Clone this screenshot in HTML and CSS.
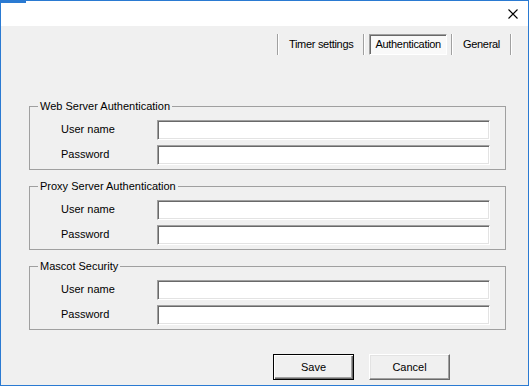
FILE: index.html
```html
<!DOCTYPE html>
<html>
<head>
<meta charset="utf-8">
<link rel="stylesheet" href="styles.css">
</head>
<body>
<div class="window">
  <div class="titlebar">
    <svg class="close" width="10" height="10" viewBox="0 0 10 10"><path d="M0.5 0.5 L9.5 9.5 M9.5 0.5 L0.5 9.5" stroke="#000" stroke-width="1.1" fill="none"/></svg>
  </div>
  <div class="content">
    <div class="tabs">
      <span class="sep"></span>
      <span class="tab">Timer settings</span>
      <span class="sep"></span>
      <span class="tab active">Authentication</span>
      <span class="sep"></span>
      <span class="tab">General</span>
      <span class="sep"></span>
    </div>
    <div class="groups">
      <fieldset class="group">
        <legend>Web Server Authentication</legend>
        <div class="rows">
          <label>User name</label><input class="field" type="text">
          <label>Password</label><input class="field" type="text">
        </div>
      </fieldset>
      <fieldset class="group">
        <legend>Proxy Server Authentication</legend>
        <div class="rows">
          <label>User name</label><input class="field" type="text">
          <label>Password</label><input class="field" type="text">
        </div>
      </fieldset>
      <fieldset class="group">
        <legend>Mascot Security</legend>
        <div class="rows">
          <label>User name</label><input class="field" type="text">
          <label>Password</label><input class="field" type="text">
        </div>
      </fieldset>
    </div>
    <div class="actions">
      <button class="btn default">Save</button>
      <button class="btn">Cancel</button>
    </div>
  </div>
</div>
</body>
</html>
```
FILE: styles.css
```css
html, body {
  margin: 0;
  padding: 0;
  background: #f0f0f0;
}
body {
  font-family: "Liberation Sans", Arial, sans-serif;
  font-size: 11px;
  color: #000;
}
.window {
  width: 529px;
  height: 386px;
  box-sizing: border-box;
  border: 1px solid #2a7ad2;
  background: #f0f0f0;
  display: flex;
  flex-direction: column;
}
.titlebar {
  position: relative;
  height: 25px;
  background: #fff;
  display: flex;
  justify-content: flex-end;
  align-items: center;
  padding-right: 10px;
}
.titlebar::before {
  content: "";
  position: absolute;
  left: -1px;
  top: -1px;
  width: 26px;
  height: 3px;
  background: #2a7ad2;
}
.close {
  display: block;
}
.content {
  flex: 1;
  display: flex;
  flex-direction: column;
}
.tabs {
  display: flex;
  justify-content: flex-end;
  align-items: stretch;
  height: 21px;
  margin-top: 8px;
  padding-right: 16px;
}
.sep {
  width: 1px;
  border-left: 1px solid #a0a0a0;
  background: #fff;
}
.tab {
  display: flex;
  align-items: center;
  padding: 0 5px;
  margin: 0 4px;
  border: 1px solid transparent;
  line-height: 13px;
  letter-spacing: -0.3px;
}
.tab.active {
  background: #f9f9f9;
  border-color: #a0a0a0 #fff #fff #a0a0a0;
  box-shadow: inset 1px 1px #696969;
}
.groups {
  display: flex;
  flex-direction: column;
  gap: 10px;
  margin-top: 45px;
  margin-left: 28px;
}
.group {
  width: 477px;
  box-sizing: border-box;
  margin: 0;
  padding: 0;
  border: 1px solid #a0a0a0;
  min-width: 0;
}
.group legend {
  margin-left: 8px;
  padding: 0 2px;
  line-height: 13px;
}
.rows {
  display: grid;
  grid-template-columns: 96px 333px;
  row-gap: 5px;
  align-items: center;
  padding: 7px 0 4px 31px;
}
.rows label {
  line-height: 13px;
  margin-bottom: 2px;
}
.field {
  box-sizing: border-box;
  height: 20px;
  width: 333px;
  margin: 0;
  padding: 0 3px;
  background: #fff;
  border: 1px solid;
  border-color: #a0a0a0 #fff #fff #a0a0a0;
  box-shadow: inset 1px 1px #696969, inset -1px -1px #e3e3e3;
  font: inherit;
  outline: none;
}
.actions {
  display: flex;
  gap: 15px;
  margin-top: 24px;
  margin-left: 272px;
}
.btn {
  box-sizing: border-box;
  width: 81px;
  height: 26px;
  margin: 0;
  padding: 0;
  font: inherit;
  color: #000;
  background: #f0f0f0;
  border: 1px solid;
  border-color: #fff #696969 #696969 #fff;
  box-shadow: inset -1px -1px #a0a0a0, inset 1px 1px #e3e3e3;
}
.btn.default {
  border-color: #000;
  box-shadow: inset 1px 1px #fff, inset -1px -1px #696969, inset -2px -2px #a0a0a0;
}
```
